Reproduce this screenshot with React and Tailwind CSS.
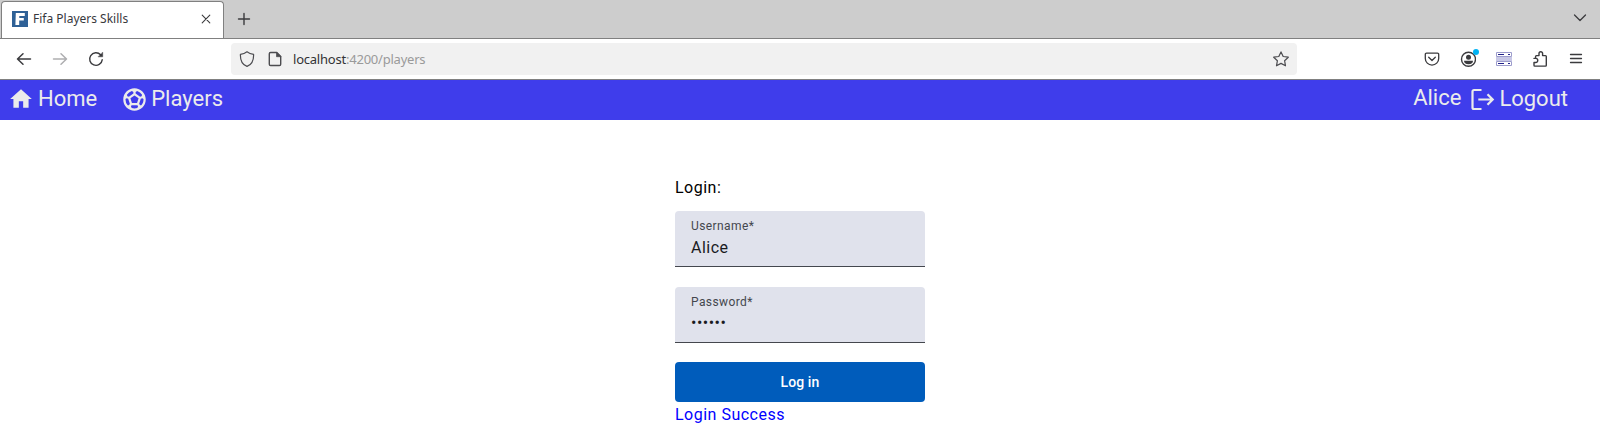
import { MdHome, MdSportsSoccer } from "react-icons/md";

function Icon({ className, children, ...rest }) {
  return (
    <svg
      viewBox="0 0 16 16"
      fill="none"
      stroke="currentColor"
      strokeWidth="1.2"
      strokeLinecap="round"
      strokeLinejoin="round"
      className={`size-4 shrink-0 ${className || ""}`}
      {...rest}
    >
      {children}
    </svg>
  );
}

function TabStrip() {
  return (
    <header className="flex h-[39px] border-b border-[#808080] bg-[#cdcdcd] pl-px text-[#3b3b3e]">
      <div className="mt-px flex w-[223px] items-center rounded-t-[4px] border border-b-0 border-[#808080] bg-white pr-[10px] pl-[10px]">
        <span className="-mt-[2px] flex size-4 items-center justify-center bg-[#2f6196]">
          <svg viewBox="0 0 16 16" className="size-4" fill="#fff">
            <path d="M3.800 2h9v3H7.300v1.900h4.500v2.700H7.200V14H3.400z" />
          </svg>
        </span>
        <span className="-mt-[2px] ml-[5px] flex-1 text-[12px] leading-4 text-[#38383d]">
          Fifa Players Skills
        </span>
        <Icon className="-mt-[3px] -mr-px" strokeWidth="1.100">
          <path d="M4.200 4.200l7.600 7.600M11.800 4.200l-7.600 7.600" />
        </Icon>
      </div>
      <Icon className="mt-[11px] ml-[12px]" strokeWidth="1.400">
        <path d="M8 2.500v11M2.500 8h11" />
      </Icon>
      <Icon className="mt-[10px] mr-3 ml-auto" strokeWidth="1.300">
        <path d="M2.500 5L8 10.500 13.500 5" />
      </Icon>
    </header>
  );
}

function Toolbar() {
  return (
    <div className="flex h-[41px] items-center border-b border-[#808080] bg-white pl-4 text-[#3b3b3e]">
      <Icon strokeWidth="1.500">
        <path d="M14.500 8H1.500M7 2.700L1.500 8 7 13.300" />
      </Icon>
      <Icon className="ml-5 text-[#aeaeb0]" strokeWidth="1.500">
        <path d="M1.500 8h13M9 2.700L14.500 8 9 13.300" />
      </Icon>
      <Icon className="ml-5" strokeWidth="1.400">
        <path d="M14.200 8.800A6.300 6.300 0 1 1 12.600 3.800" />
        <path d="M14.700 1.500v4.300h-4.300z" fill="currentColor" strokeWidth=".5" />
      </Icon>
      <div className="ml-[127px] flex h-8 w-[1066px] items-center rounded-[4px] bg-[#f1f1f1] px-2 text-[#4c4c50]">
        <Icon>
          <path d="M8 .8c2 1.600 4 2.300 6.600 2.600C14.800 9.500 12.800 13.700 8 15.400 3.200 13.700 1.200 9.500 1.400 3.400 4 3.100 6 2.400 8 .8z" />
        </Icon>
        <Icon className="ml-3" strokeWidth="1.400">
          <path d="M3.600 1.500h6.200l3.900 3.900v7.800a1.300 1.300 0 0 1-1.300 1.300H3.600a1.300 1.300 0 0 1-1.300-1.300V2.800a1.300 1.300 0 0 1 1.300-1.300z" />
          <path d="M9.500 1.500v4.200h4.200z" fill="currentColor" strokeWidth=".7" />
        </Icon>
        <span className="ml-[10px] flex-1 text-[13px] leading-5 tracking-[-0.22px] text-[#9a9a9a]">
          <span className="text-[#333336]">localhost</span>:4200/players
        </span>
        <Icon strokeWidth="1.200">
          <path d="M8 .9l2.200 4.600 5.100.7-3.700 3.500.9 5.100L8 12.400l-4.500 2.400.9-5.100L.7 6.200l5.100-.7z" />
        </Icon>
      </div>
      <div className="mr-4 ml-auto flex items-center gap-5">
        <Icon strokeWidth="1.300">
          <path d="M2.500 2.200h11a1.200 1.200 0 0 1 1.200 1.200v4a6.700 6.700 0 0 1-13.400 0v-4a1.200 1.200 0 0 1 1.200-1.200z" />
          <path d="M4.700 6.300L8 9.500l3.300-3.200" />
        </Icon>
        <div className="relative">
          <Icon strokeWidth="1.400">
            <circle cx="8.500" cy="8.300" r="7" />
            <circle cx="8.500" cy="6.200" r="2.500" fill="currentColor" stroke="none" />
            <path d="M4 9.800h9a4.500 3.400 0 0 1-9 0z" fill="currentColor" stroke="none" />
          </Icon>
          <span className="absolute -top-[2px] -right-[3px] size-[6px] rounded-full bg-[#00b3f4]" />
        </div>
        <Icon strokeWidth="1" className="text-[#9c9ccc]" strokeLinecap="butt">
          <path d="M.5 1.500h15v4H.5zM.5 10.500h15v4H.5z" fill="#fff" />
          <path d="M0 6h16v4H0z" fill="#c8c8e6" stroke="none" />
          <path d="M2 3.500h6M2 12.500h6M12 3.500h2M12 12.500h2" stroke="#22228a" strokeWidth="1.200" />
        </Icon>
        <Icon strokeWidth="1.400">
          <path d="M2 11.500V14.300a.8.800 0 0 0 .8.800h10.700a.8.800 0 0 0 .8-.8V5.400a.8.800 0 0 0-.8-.8H10.600V2.500a1.800 1.800 0 0 0-3.600 0v2.100H4.400a.8.800 0 0 0-.8.800V7.400M2 11.500h1.700a2.050 2.050 0 0 0 0-4.100H2" />
        </Icon>
        <Icon strokeWidth="1.300">
          <path d="M2.500 3.500h11M2.500 7.500h11M2.500 11.500h11" />
        </Icon>
      </div>
    </div>
  );
}

function NavBar() {
  return (
    <nav className="flex h-10 items-center bg-[#3f3deb] pr-8 pb-[2px] pl-2 font-[Roboto,sans-serif] text-[22px] leading-[34px] text-[#ebebeb]">
      <a className="flex items-center">
        <MdHome className="size-[26px]" />
        <span className="ml-1">Home</span>
      </a>
      <a className="ml-[24px] flex items-center">
        <MdSportsSoccer className="size-[27px]" />
        <span className="ml-[3px]">Players</span>
      </a>
      <span className="mr-[7px] ml-auto -translate-y-px">Alice</span>
      <a className="flex items-center">
        <svg
          viewBox="0 0 27 26"
          className="h-[26px] w-[27px]"
          fill="none"
          stroke="currentColor"
          strokeWidth="2.200"
        >
          <path d="M13.500 4H6a1.500 1.500 0 0 0-1.500 1.500v16A1.500 1.500 0 0 0 6 23h7.500" />
          <path d="M10.300 13.500H25M19.500 8.300l5.200 5.200-5.200 5.200" />
        </svg>
        <span className="ml-1">Logout</span>
      </a>
    </nav>
  );
}

function Field({ label, children }) {
  return (
    <div className="h-14 rounded-t-[4px] border-b border-[#44474e] bg-[#e0e2ec] px-4 pt-[6px]">
      <div className="text-[12px] leading-[18px] tracking-[0.4px] text-[#44474e]">{label}*</div>
      <div className="pt-px text-[16px] leading-6 tracking-[0.5px] text-[#1a1b1f]">{children}</div>
    </div>
  );
}

function LoginForm() {
  return (
    <main className="flex justify-center pt-[56px] font-[Roboto,sans-serif] text-[16px] leading-6 tracking-[0.5px]">
      <div className="flex w-[250px] flex-col">
        <p className="text-black">Login:</p>
        <div className="mt-[11px] flex flex-col gap-5">
          <Field label="Username">Alice</Field>
          <Field label="Password">
            <span className="block h-6 leading-[22px]">••••••</span>
          </Field>
        </div>
        <button className="mt-[19px] h-10 rounded-[4px] bg-[#005cbb] text-[14px] font-medium tracking-[0.1px] text-white">
          Log in
        </button>
        <p className="mt-px text-[#0000ff]">Login Success</p>
      </div>
    </main>
  );
}

export default function App() {
  return (
    <div className="h-[444px] overflow-hidden bg-white font-['Noto_Sans',sans-serif]">
      <TabStrip />
      <Toolbar />
      <NavBar />
      <LoginForm />
    </div>
  );
}
